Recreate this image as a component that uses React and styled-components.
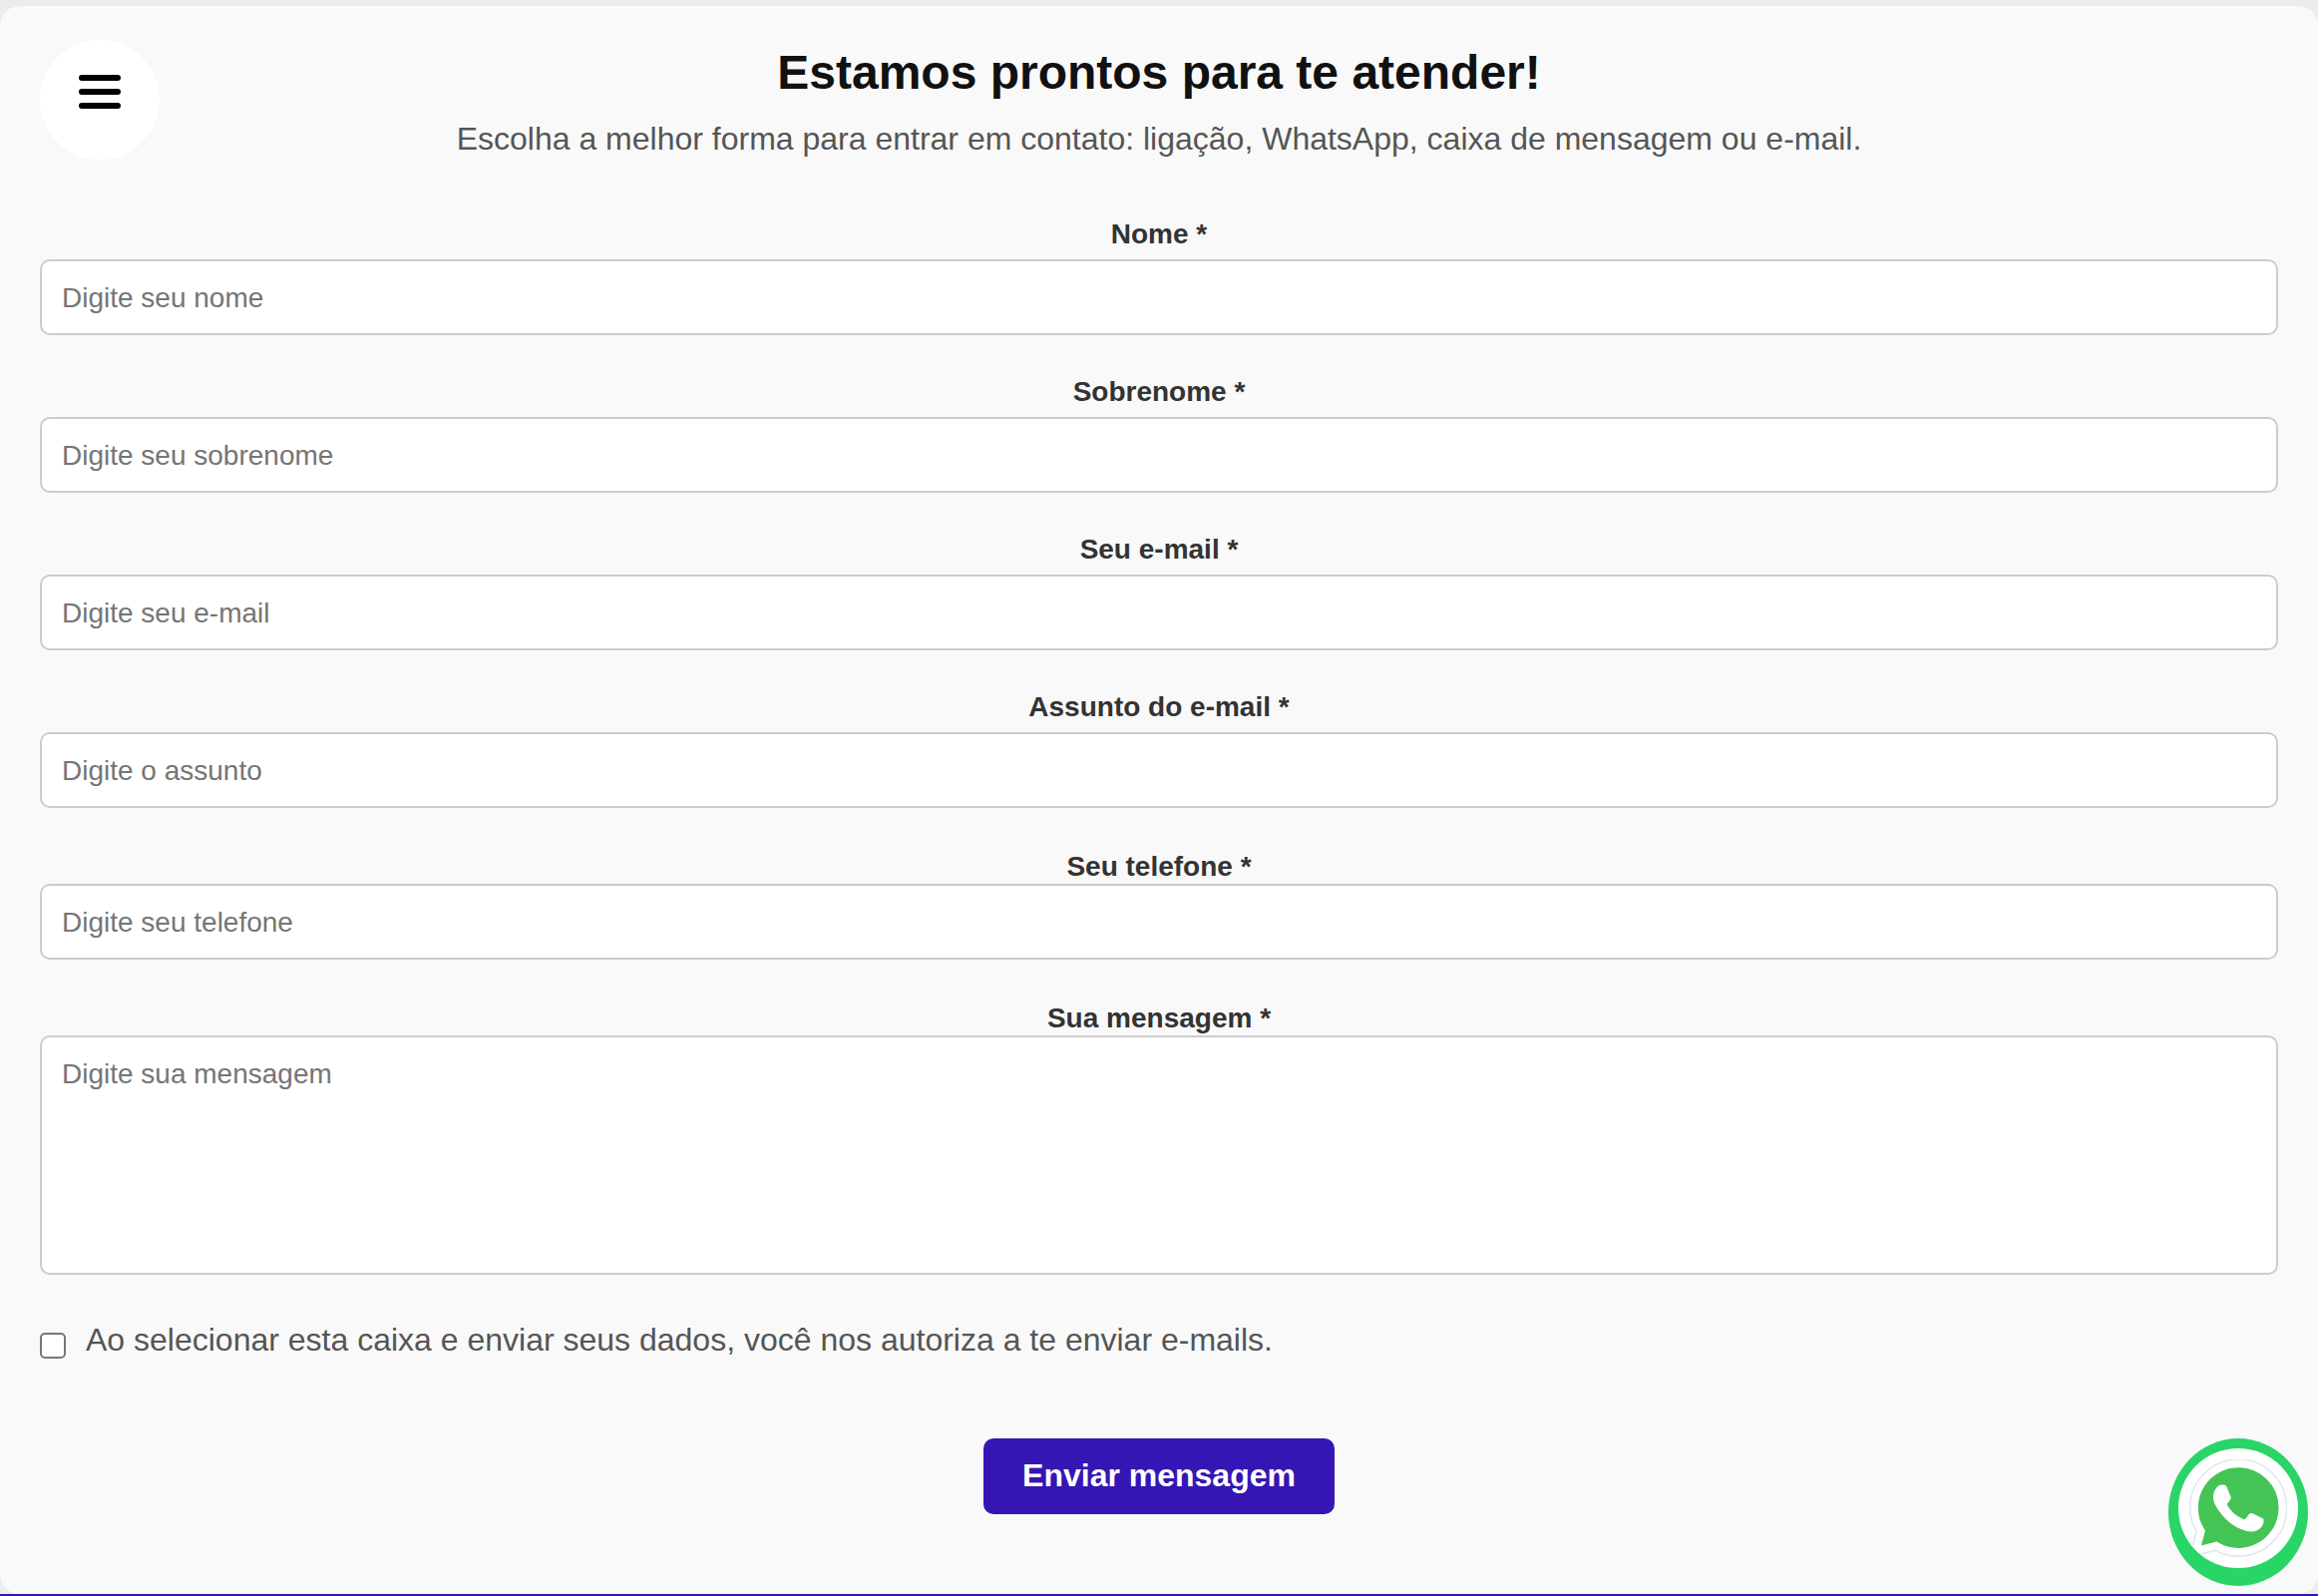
import React from "react";
import styled, { createGlobalStyle } from "styled-components";

const fields = [
  { label: "Nome *", placeholder: "Digite seu nome" },
  { label: "Sobrenome *", placeholder: "Digite seu sobrenome" },
  { label: "Seu e-mail *", placeholder: "Digite seu e-mail" },
  { label: "Assunto do e-mail *", placeholder: "Digite o assunto" },
  { label: "Seu telefone *", placeholder: "Digite seu telefone", tight: true },
];

const App = () => {
  return (
    <Page>
      <GlobalStyle />
      <Card>
        <Header>
          <MenuButton aria-label="Menu">
            <svg width="42" height="34" viewBox="0 0 42 34">
              <path
                d="M3 3h36M3 17h36M3 31h36"
                stroke="#000"
                strokeWidth="6"
                strokeLinecap="round"
              />
            </svg>
          </MenuButton>
          <Heading>
            <Title>Estamos prontos para te atender!</Title>
            <Subtitle>
              Escolha a melhor forma para entrar em contato: ligação, WhatsApp,
              caixa de mensagem ou e-mail.
            </Subtitle>
          </Heading>
        </Header>
        <Form>
          {fields.map((field) => (
            <Field key={field.label}>
              <Label $tight={field.tight}>{field.label}</Label>
              <Input type="text" placeholder={field.placeholder} />
            </Field>
          ))}
          <Field>
            <Label $tight>Sua mensagem *</Label>
            <TextArea placeholder="Digite sua mensagem" />
          </Field>
          <ConsentRow>
            <Checkbox type="checkbox" />
            <ConsentText>
              Ao selecionar esta caixa e enviar seus dados, você nos autoriza a
              te enviar e-mails.
            </ConsentText>
          </ConsentRow>
          <SubmitButton type="button">Enviar mensagem</SubmitButton>
        </Form>
        <WhatsappLink href="#" aria-label="WhatsApp">
          <WhatsappBadge>
            <svg width="98" height="98" viewBox="0 0 24 24">
              <path
                fill="none"
                stroke="#e3e7ee"
                strokeWidth="0.4"
                d="M20.464 3.488A11.815 11.815 0 0012.05 0C5.495 0 .16 5.335.157 11.892c0 2.096.547 4.142 1.588 5.945L.057 24l6.305-1.654a11.882 11.882 0 005.683 1.448h.005c6.554 0 11.89-5.335 11.893-11.893a11.821 11.821 0 00-3.48-8.413Z"
              />
              <path
                fill="#44c455"
                d="M12.051 21.785h-.004a9.87 9.87 0 01-5.031-1.378l-.361-.214-3.741.982.998-3.648-.235-.374a9.86 9.86 0 01-1.51-5.26c.001-5.45 4.436-9.884 9.888-9.884 2.64 0 5.122 1.03 6.988 2.898a9.825 9.825 0 012.893 6.994c-.003 5.45-4.437 9.884-9.885 9.884"
              />
              <path
                fill="#fff"
                stroke="#fff"
                strokeWidth="0.3"
                strokeLinejoin="round"
                d="M17.472 14.382c-.297-.149-1.758-.867-2.03-.967-.273-.099-.471-.148-.67.15-.197.297-.767.966-.94 1.164-.173.199-.347.223-.644.075-.297-.15-1.255-.463-2.39-1.475-.883-.788-1.48-1.761-1.653-2.059-.173-.297-.018-.458.13-.606.134-.133.298-.347.446-.52.149-.174.198-.298.298-.497.099-.198.05-.371-.025-.52-.075-.149-.669-1.612-.916-2.207-.242-.579-.487-.5-.669-.51-.173-.008-.371-.01-.57-.01-.198 0-.52.074-.792.372-.272.297-1.04 1.016-1.04 2.479 0 1.462 1.065 2.875 1.213 3.074.149.198 2.096 3.2 5.077 4.487.709.306 1.262.489 1.694.625.712.227 1.36.195 1.871.118.571-.085 1.758-.719 2.006-1.413.248-.694.248-1.289.173-1.413-.074-.124-.272-.198-.57-.347"
              />
            </svg>
          </WhatsappBadge>
        </WhatsappLink>
      </Card>
      <BottomLine />
    </Page>
  );
};

const GlobalStyle = createGlobalStyle`
  html, body {
    margin: 0;
    padding: 0;
    background-color: #ececec;
  }
  * {
    box-sizing: border-box;
  }
  body, input, textarea, button {
    font-family: "Liberation Sans", Arial, sans-serif;
  }
`;

const Page = styled.div`
  min-height: 1600px;
  padding-top: 6px;
  display: flex;
  flex-direction: column;
`;

const Card = styled.main`
  position: relative;
  flex: 1;
  padding: 34px 40px 0;
  background-color: #f9f9f9;
  border-radius: 20px;
`;

const BottomLine = styled.div`
  height: 2px;
  background-color: #3516b5;
`;

const Header = styled.header`
  display: grid;
  grid-template-columns: 120px 1fr 120px;
  margin-bottom: 58px;
`;

const MenuButton = styled.button`
  width: 120px;
  height: 120px;
  padding: 0 0 16px;
  border: none;
  border-radius: 50%;
  background-color: #fff;
  display: flex;
  align-items: center;
  justify-content: center;
`;

const Heading = styled.div`
  padding-top: 5px;
  text-align: center;
`;

const Title = styled.h1`
  margin: 0 0 18px;
  font-size: 48px;
  line-height: 56px;
  font-weight: 700;
  color: #111;
`;

const Subtitle = styled.p`
  margin: 0;
  font-size: 32px;
  line-height: 40px;
  color: #555;
`;

const Form = styled.form`
  display: flex;
  flex-direction: column;
`;

const Field = styled.div`
  display: flex;
  flex-direction: column;
  margin-bottom: 40px;
`;

const Label = styled.label`
  height: 32px;
  margin-bottom: ${(props) => (props.$tight ? "2px" : "10px")};
  margin-top: ${(props) => (props.$tight ? "2px" : "0")};
  padding-top: 2px;
  font-size: 28px;
  line-height: 30px;
  font-weight: 700;
  text-align: center;
  color: #333;
`;

const Input = styled.input`
  height: 76px;
  padding: 2px 20px 0;
  border: 2px solid #ccc;
  border-radius: 10px;
  background-color: #fff;
  font-size: 28px;
  color: #333;
  &::placeholder {
    color: #757575;
  }
`;

const TextArea = styled.textarea`
  display: block;
  height: 240px;
  padding: 20px;
  border: 2px solid #ccc;
  border-radius: 10px;
  background-color: #fff;
  font-size: 28px;
  line-height: 34px;
  resize: none;
  &::placeholder {
    color: #757575;
  }
`;

const ConsentRow = styled.div`
  display: flex;
  align-items: flex-start;
  gap: 20px;
  margin-top: 4px;
`;

const Checkbox = styled.input`
  appearance: none;
  width: 26px;
  height: 26px;
  margin: 14px 0 0;
  border: 2px solid #767676;
  border-radius: 5px;
  background-color: #fff;
`;

const ConsentText = styled.span`
  padding-top: 2px;
  font-size: 32px;
  line-height: 38px;
  color: #555;
`;

const SubmitButton = styled.button`
  align-self: center;
  width: 352px;
  height: 76px;
  margin-top: 80px;
  padding: 0 0 2px;
  border: none;
  border-radius: 10px;
  background-color: #3516b5;
  color: #fff;
  font-size: 32px;
  font-weight: 700;
`;

const WhatsappLink = styled.a`
  position: absolute;
  right: 10px;
  bottom: 8px;
  width: 140px;
  height: 148px;
  padding: 10px;
  border-radius: 50%;
  background-color: #29d567;
`;

const WhatsappBadge = styled.div`
  width: 120px;
  height: 120px;
  padding: 11px;
  border-radius: 50%;
  background-color: #fff;
  overflow: hidden;
  svg {
    display: block;
    filter: blur(0.7px);
  }
`;

export default App;
